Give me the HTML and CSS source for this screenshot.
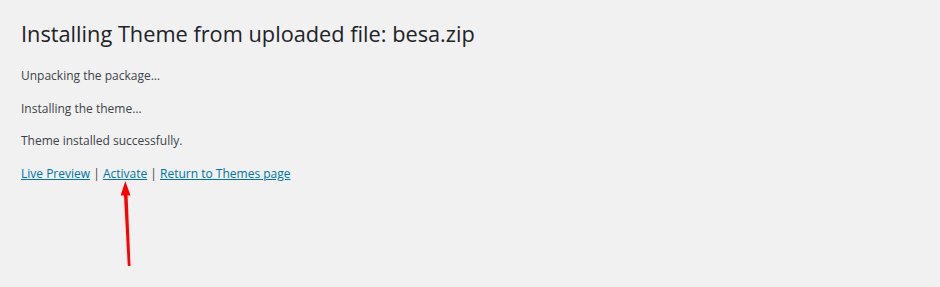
FILE: index.html
```html
<!DOCTYPE html>
<html>
<head>
<meta charset="utf-8">
<link rel="stylesheet" href="styles.css">
</head>
<body>
<div class="wrap">
  <h1 class="title">Installing Theme from uploaded file: besa.zip</h1>
  <p>Unpacking the package…</p>
  <p>Installing the theme…</p>
  <p>Theme installed successfully.</p>
  <p class="actions"><a href="#">Live Preview</a> | <a href="#">Activate</a> | <a href="#">Return to Themes page</a></p>
</div>
<svg class="arrow" width="24" height="90" viewBox="0 0 24 90">
  <polygon points="15.3,0 10.7,14.5 20.5,14.5" fill="#ff0000"/>
  <polygon points="13.9,13 17.5,13 20.5,85 17.8,85" fill="#ff0000"/>
</svg>
</body>
</html>
```
FILE: styles.css
```css
html, body {
  margin: 0;
  padding: 0;
  background: #f1f1f1;
}
body {
  font-family: "Open Sans", "Noto Sans", sans-serif;
  font-size: 12px;
  line-height: 19.5px;
  color: #3c434a;
  height: 287px;
  position: relative;
  overflow: hidden;
}
.wrap {
  padding: 10px 0 0 21px;
}
.title {
  font-size: 21.75px;
  font-weight: 400;
  line-height: 30px;
  margin: 0;
  padding: 9px 0 4px;
  color: #1d2327;
}
p {
  margin: 13px 0;
}
a {
  color: #0073aa;
  text-decoration: underline;
}
.arrow {
  position: absolute;
  left: 110px;
  top: 181px;
}
```
